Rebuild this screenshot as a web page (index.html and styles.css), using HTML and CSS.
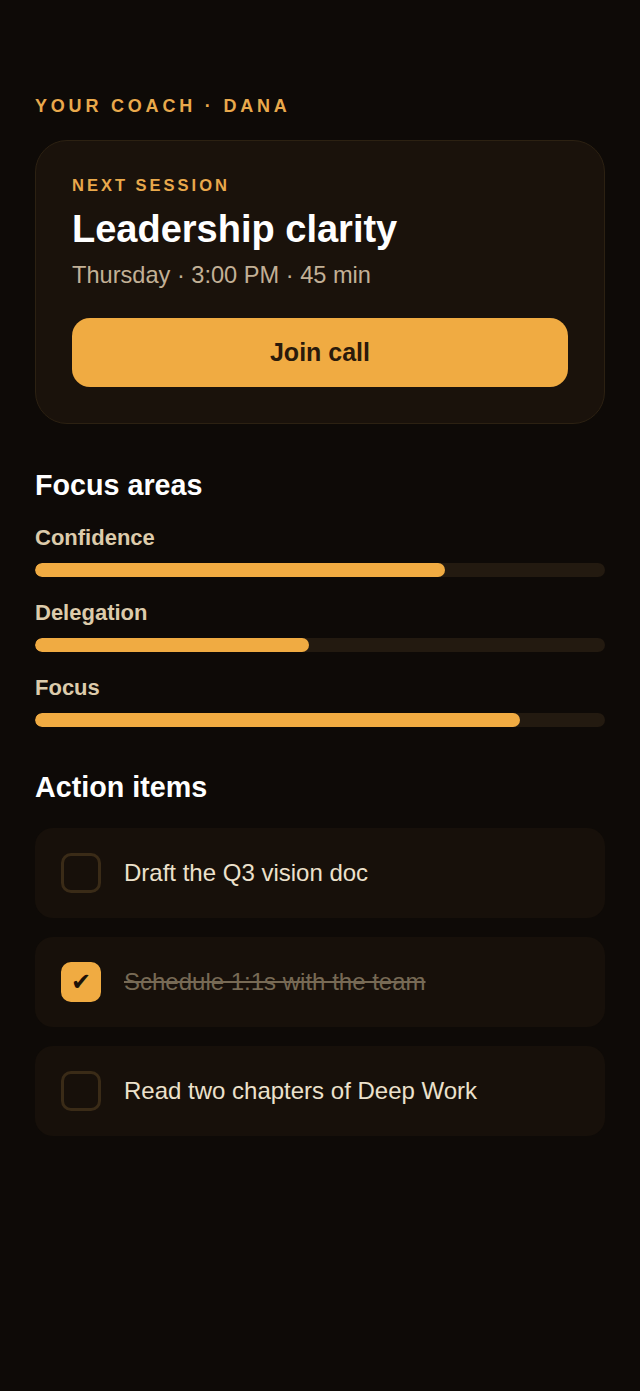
FILE: index.html
```html
<!DOCTYPE html>
<html>
<head>
<meta charset="utf-8">
<link rel="stylesheet" href="styles.css">
</head>
<body>
<main class="page">
  <div class="eyebrow">Your coach · Dana</div>
  <section class="session">
    <div class="session-label">Next session</div>
    <h1 class="session-title">Leadership clarity</h1>
    <div class="session-meta">Thursday · 3:00 PM · 45 min</div>
    <button class="join">Join call</button>
  </section>

  <h2 class="section-title">Focus areas</h2>
  <div class="areas">
    <div class="area">
      <div class="area-name">Confidence</div>
      <div class="track"><div class="fill" style="width:72%"></div></div>
    </div>
    <div class="area">
      <div class="area-name">Delegation</div>
      <div class="track"><div class="fill" style="width:48%"></div></div>
    </div>
    <div class="area">
      <div class="area-name">Focus</div>
      <div class="track"><div class="fill" style="width:85%"></div></div>
    </div>
  </div>

  <h2 class="section-title actions-title">Action items</h2>
  <ul class="items">
    <li class="item"><span class="box"></span><span class="item-text">Draft the Q3 vision doc</span></li>
    <li class="item done"><span class="box checked">✔</span><span class="item-text">Schedule 1:1s with the team</span></li>
    <li class="item"><span class="box"></span><span class="item-text">Read two chapters of Deep Work</span></li>
  </ul>
</main>
</body>
</html>
```

FILE: styles.css
```css
* { box-sizing: border-box; }
html, body { margin: 0; padding: 0; }
body {
  background: #0e0a07;
  font-family: "Liberation Sans", Arial, sans-serif;
  color: #fff;
  min-height: 1391px;
}
.page {
  padding: 95px 35px 0 35px;
  display: flex;
  flex-direction: column;
}
.eyebrow {
  text-transform: uppercase;
  color: #e9a94c;
  font-weight: 700;
  font-size: 18px;
  letter-spacing: 3.8px;
  line-height: 22px;
}
.session {
  margin-top: 23px;
  background: #1a120b;
  border: 1px solid #2c2112;
  border-radius: 32px;
  padding: 34px 36px 36px 36px;
  display: flex;
  flex-direction: column;
}
.session-label {
  text-transform: uppercase;
  color: #e9a94c;
  font-weight: 700;
  font-size: 16.5px;
  letter-spacing: 3px;
  line-height: 20px;
}
.session-title {
  margin: 12px 0 0 0;
  font-size: 38px;
  line-height: 44px;
  font-weight: 700;
  color: #fff;
}
.session-meta {
  margin-top: 10px;
  font-size: 23.6px;
  line-height: 28px;
  color: #c2b096;
}
.join {
  margin-top: 29px;
  height: 69px;
  border: none;
  border-radius: 18px;
  background: #f0ab42;
  color: #2a1a0b;
  font-family: inherit;
  font-weight: 700;
  font-size: 25px;
}
.section-title {
  margin: 44px 0 0 0;
  font-size: 28.7px;
  line-height: 34px;
  font-weight: 700;
  color: #fff;
}
.areas {
  margin-top: 23px;
  display: flex;
  flex-direction: column;
  gap: 23px;
}
.area-name {
  font-size: 22px;
  line-height: 26px;
  font-weight: 700;
  color: #dccbab;
}
.track {
  margin-top: 12px;
  height: 14px;
  border-radius: 7px;
  background: #231a10;
  overflow: hidden;
}
.fill {
  height: 100%;
  border-radius: 7px;
  background: #f0ab42;
}
.actions-title {
  margin-top: 43px;
}
.items {
  list-style: none;
  margin: 24px 0 0 0;
  padding: 0;
  display: flex;
  flex-direction: column;
  gap: 19px;
}
.item {
  height: 90px;
  background: #17100a;
  border-radius: 18px;
  display: flex;
  align-items: center;
  padding: 0 26px;
  gap: 23px;
}
.box {
  width: 40px;
  height: 40px;
  flex: none;
  border: 3px solid #3a2b17;
  border-radius: 10px;
  display: flex;
  align-items: center;
  justify-content: center;
}
.box.checked {
  background: #f0ab42;
  border-color: #f0ab42;
  color: #1d1208;
  font-family: "DejaVu Sans", sans-serif;
  font-size: 24px;
  line-height: 1;
}
.item-text {
  font-size: 24px;
  line-height: 28px;
  color: #ece1cc;
}
.done .item-text {
  color: #776a55;
  text-decoration: line-through;
}
```
